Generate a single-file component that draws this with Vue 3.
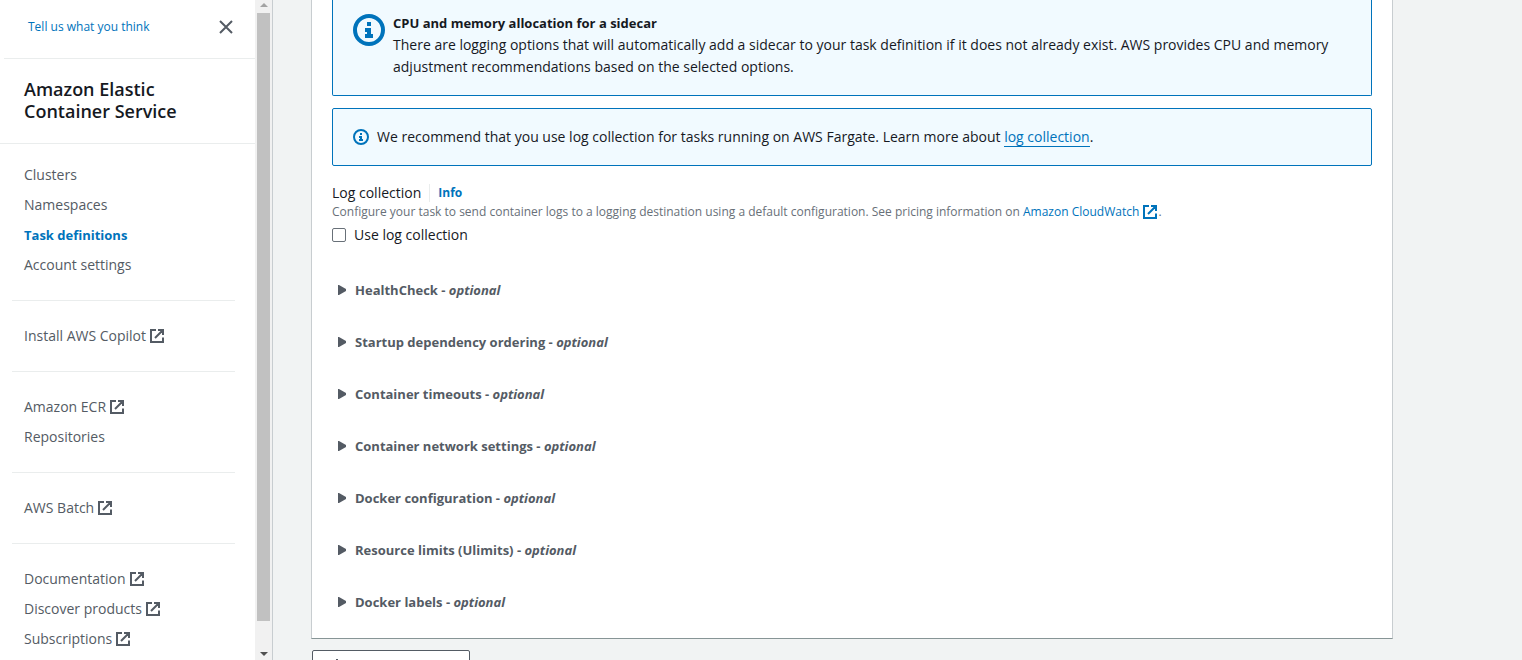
<script setup>
import { ref } from 'vue'

const groups = [
  [
    { text: 'Clusters' },
    { text: 'Namespaces' },
    { text: 'Task definitions', active: true },
    { text: 'Account settings' },
  ],
  [{ text: 'Install AWS Copilot', external: true }],
  [{ text: 'Amazon ECR', external: true }, { text: 'Repositories' }],
  [{ text: 'AWS Batch', external: true }],
  [
    { text: 'Documentation', external: true },
    { text: 'Discover products', external: true },
    { text: 'Subscriptions', external: true },
  ],
]

const sections = [
  'HealthCheck',
  'Startup dependency ordering',
  'Container timeouts',
  'Container network settings',
  'Docker configuration',
  'Resource limits (Ulimits)',
  'Docker labels',
]

const useLogs = ref(false)
</script>

<template>
  <div class="page">
    <aside class="side">
      <div class="side-content">
        <div class="side-top">
          <a href="#" class="feedback">Tell us what you think</a>
          <button type="button" class="close" aria-label="Close navigation">
            <svg viewBox="0 0 16 16" width="16" height="16">
              <path d="M2 2l12 12M14 2L2 14" fill="none" stroke="currentColor" stroke-width="2" />
            </svg>
          </button>
        </div>
        <h2 class="service">Amazon Elastic Container Service</h2>
        <nav class="nav">
          <ul v-for="(group, g) in groups" :key="g" class="group">
            <li v-for="item in group" :key="item.text">
              <a href="#" :class="['nav-link', { active: item.active }]">
                {{ item.text }}
                <svg v-if="item.external" class="ext" viewBox="0 0 14 14" width="14" height="14">
                  <path d="M6 1H1v12h12V8.500M8 1h5v5M13 1L5 9" fill="none" stroke="currentColor" stroke-width="2" />
                </svg>
              </a>
            </li>
          </ul>
        </nav>
      </div>
      <div class="scrollbar" aria-hidden="true">
        <svg class="arrow up" viewBox="0 0 8 4" width="8" height="4"><path d="M0 4L4 0l4 4z" /></svg>
        <div class="thumb"></div>
        <svg class="arrow" viewBox="0 0 8 4" width="8" height="4"><path d="M0 0h8L4 4z" /></svg>
      </div>
    </aside>

    <main class="main">
      <section class="card">
        <div class="alert alert-cut">
          <svg class="info" viewBox="0 0 16 16" width="32" height="32">
            <circle cx="8" cy="8" r="7" fill="none" stroke="currentColor" stroke-width="2" />
            <path d="M7 4h2v2H7zM6 7h3v3h1v2H6v-2h1V9H6z" fill="currentColor" />
          </svg>
          <div>
            <strong>CPU and memory allocation for a sidecar</strong>
            <p>There are logging options that will automatically add a sidecar to your task definition if it does not already exist. AWS provides CPU and memory adjustment recommendations based on the selected options.</p>
          </div>
        </div>

        <div class="alert">
          <svg class="info small" viewBox="0 0 16 16" width="16" height="16">
            <circle cx="8" cy="8" r="7" fill="none" stroke="currentColor" stroke-width="2" />
            <path d="M7 4h2v2H7zM6 7h3v3h1v2H6v-2h1V9H6z" fill="currentColor" />
          </svg>
          <p>We recommend that you use log collection for tasks running on AWS Fargate. Learn more about <a href="#" class="underlined">log collection</a>.</p>
        </div>

        <div class="field">
          <div class="field-head">
            <span>Log collection</span>
            <a href="#" class="info-link">Info</a>
          </div>
          <p class="desc">Configure your task to send container logs to a logging destination using a default configuration. See pricing information on <a href="#" class="desc-link">Amazon CloudWatch
            <svg class="ext" viewBox="0 0 14 14" width="14" height="14">
              <path d="M6 1H1v12h12V8.500M8 1h5v5M13 1L5 9" fill="none" stroke="currentColor" stroke-width="2" />
            </svg></a>.</p>
          <label class="check"><input v-model="useLogs" type="checkbox" />Use log collection</label>
        </div>

        <div class="sections">
          <button v-for="name in sections" :key="name" type="button" class="expander">
            <svg viewBox="0 0 8 10" width="8" height="10"><path d="M0 0h1l7 4v2l-7 4H0z" fill="currentColor" /></svg>
            <span>{{ name }} - <em>optional</em></span>
          </button>
        </div>
      </section>

      <button type="button" class="add" aria-label="Add">
        <svg viewBox="0 0 16 16" width="16" height="16">
          <path d="M8 1v14M1 8h14" fill="none" stroke="currentColor" stroke-width="2" />
        </svg>
      </button>
    </main>
  </div>
</template>

<style>
body {
  margin: 0;
  background: #f2f3f3;
}
</style>

<style scoped>
.page {
  display: flex;
  height: 100vh;
  overflow: hidden;
  font-family: "Open Sans", "Noto Sans", sans-serif;
  font-size: 14px;
  line-height: 22px;
  color: #16191f;
  background: #f1f3f3;
}
p, ul, h2 {
  margin: 0;
  padding: 0;
}
a {
  color: #0073bb;
  text-decoration: none;
}
button {
  font: inherit;
  cursor: pointer;
}
strong {
  display: block;
  font-size: 13px;
  font-weight: 700;
}
.side {
  display: flex;
  flex: none;
  width: 272px;
  background: #fff;
  border-right: 1px solid #c8cdd0;
}
.side-content {
  flex: 1;
  overflow: hidden;
}
.side-top {
  display: flex;
  align-items: center;
  justify-content: space-between;
  box-sizing: border-box;
  margin-left: 4px;
  padding: 0 21px 4px 24px;
  height: 59px;
  border-bottom: 1px solid #eaeded;
}
.feedback {
  font-size: 12px;
}
.close {
  display: flex;
  padding: 0;
  border: 0;
  background: none;
  color: #545b64;
}
.service {
  padding: 19px 60px 21px 24px;
  font-size: 18px;
  line-height: 22px;
  font-weight: 600;
  border-bottom: 1px solid #eaeded;
}
.nav {
  padding: 20px 20px 0 12px;
}
.group {
  display: flex;
  flex-direction: column;
  gap: 8px;
  padding: 0 12px;
  list-style: none;
}
.group + .group {
  margin-top: 24px;
  padding-top: 24px;
  border-top: 1px solid #eaeded;
}
.nav-link {
  display: flex;
  align-items: center;
  gap: 4px;
  color: #545b64;
}
.nav-link.active {
  color: #0073bb;
  font-size: 13px;
  font-weight: 700;
}
.scrollbar {
  display: flex;
  flex-direction: column;
  align-items: center;
  flex: none;
  width: 17px;
  box-sizing: border-box;
  padding: 3px 2px 4px;
  background: #f1f1f1;
}
.arrow {
  flex: none;
  fill: #505050;
}
.arrow.up {
  fill: #a3a3a3;
}
.thumb {
  flex: 1;
  width: 13px;
  margin: 6px 0 31px;
  background: #c1c1c1;
}
.main {
  flex: 1;
  min-width: 0;
  padding: 0 129px 0 38px;
}
.card {
  padding: 0 20px 25px;
  background: #fff;
  border: 1px solid #c8cdd0;
  border-top: 0;
  border-bottom-color: #879596;
}
.alert {
  display: flex;
  gap: 8px;
  padding: 17px 20px;
  border: 1px solid #0073bb;
  border-radius: 2px;
  background: #f1faff;
  margin-bottom: 12px;
}
.alert-cut {
  padding-top: 12px;
  border-top: 0;
  border-radius: 0 0 2px 2px;
}
.info {
  flex: none;
  margin-top: 2px;
  color: #0073bb;
}
.info.small {
  margin-top: 3px;
}
.underlined {
  border-bottom: 1px solid #0073bb;
}
.field {
  padding-top: 4px;
}
.field-head {
  display: flex;
  align-items: center;
}
.info-link {
  margin-left: 8px;
  padding-left: 8px;
  border-left: 1px solid #eaeded;
  font-size: 12px;
  line-height: 18px;
  font-weight: 700;
}
.desc {
  font-size: 12px;
  line-height: 16px;
  color: #687078;
}
.desc .ext {
  margin: 0 1px;
  vertical-align: -3px;
}
.check {
  display: flex;
  align-items: center;
  gap: 8px;
  margin-top: 4px;
}
.check input {
  appearance: none;
  width: 14px;
  height: 14px;
  margin: 0;
  border: 1px solid #687078;
  border-radius: 2px;
  background: #fff;
}
.check input:checked {
  background: #0073bb;
}
.sections {
  display: flex;
  flex-direction: column;
  align-items: flex-start;
  gap: 30px;
  margin-top: 33px;
  padding-left: 6px;
}
.expander {
  display: flex;
  align-items: center;
  gap: 9px;
  padding: 0;
  border: 0;
  background: none;
  color: #545b64;
  font-size: 13px;
  font-weight: 700;
}
.add {
  display: flex;
  align-items: center;
  height: 32px;
  min-width: 158px;
  margin: 11px 0 0 1px;
  padding: 0 16px;
  border: 1px solid #545b64;
  border-radius: 2px;
  background: #fff;
  color: #545b64;
}
</style>
